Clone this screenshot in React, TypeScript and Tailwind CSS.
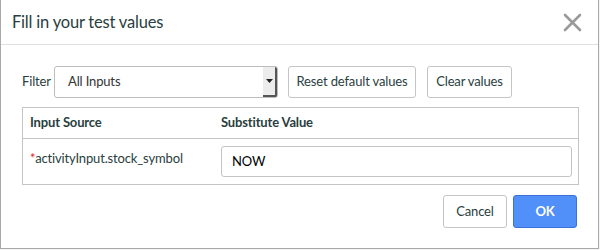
export default function App() {
  return (
    <div className="h-[250px] w-[600px] bg-[#f4f4f4] font-['Lato',sans-serif] text-[13px] tracking-[-0.15px] text-[#293e40]">
      <div className="flex h-[249px] w-[599px] flex-col border-b border-l border-r border-[#a9a9a9] bg-white">
        <div className="flex h-[45px] items-center justify-between border-b border-[#e0e0e0] pl-[11px] pr-[16px]">
          <h1 className="text-[16.5px] leading-none tracking-[-0.2px]">Fill in your test values</h1>
          <svg width="19" height="19" viewBox="0 0 19 19" className="mt-[1px]">
            <path d="M2 2 L17 17 M17 2 L2 17" stroke="#9a9a9a" strokeWidth="2.6" strokeLinecap="round" />
          </svg>
        </div>

        <div className="flex flex-col px-[21px]">
          <div className="mt-[21px] flex items-center">
            <span className="w-[32px]">Filter</span>
            <div className="flex h-[32px] w-[224px] items-stretch overflow-hidden rounded-[3px] border border-[#bdbdbd]">
              <span className="flex flex-1 items-center pl-[13px] text-[#333]">All Inputs</span>
              <span className="flex w-[14px] items-center justify-center border-r-2 border-b-2 border-[#555] bg-[#ececec]">
                <svg width="7" height="4" viewBox="0 0 7 4">
                  <path d="M0 0 H7 L3.5 4 Z" fill="#222" />
                </svg>
              </span>
            </div>
            <button className="ml-[10px] h-[32px] w-[128px] rounded-[3px] border border-[#c4c4c4] bg-white text-[#293e40]">
              Reset default values
            </button>
            <button className="ml-[11px] h-[32px] w-[85px] rounded-[3px] border border-[#c4c4c4] bg-white text-[#293e40]">
              Clear values
            </button>
          </div>

          <div className="mt-[9px] w-[557px] border border-[#c4c4c4]">
            <div className="flex h-[31px] items-center border-b border-[#c4c4c4] font-bold">
              <span className="w-[198px] pl-[7px]">Input Source</span>
              <span>Substitute Value</span>
            </div>
            <div className="flex h-[45px] items-start">
              <span className="mt-[10px] w-[198px] pl-[7px]">
                <span className="text-[#e0241f]">*</span>activityInput.stock_symbol
              </span>
              <div className="mt-[7px] flex h-[31px] w-[351px] items-center rounded-[3px] border border-[#c4c4c4] pl-[10px] text-black">
                NOW
              </div>
            </div>
          </div>

          <div className="mt-[10px] flex justify-end gap-[6px]">
            <button className="h-[33px] w-[64px] rounded-[3px] border border-[#c4c4c4] bg-white text-[#293e40]">
              Cancel
            </button>
            <button className="h-[33px] w-[64px] rounded-[3px] border border-[#3f6fd8] bg-[#5190f8] font-bold text-white">
              OK
            </button>
          </div>
        </div>
      </div>
    </div>
  )
}
